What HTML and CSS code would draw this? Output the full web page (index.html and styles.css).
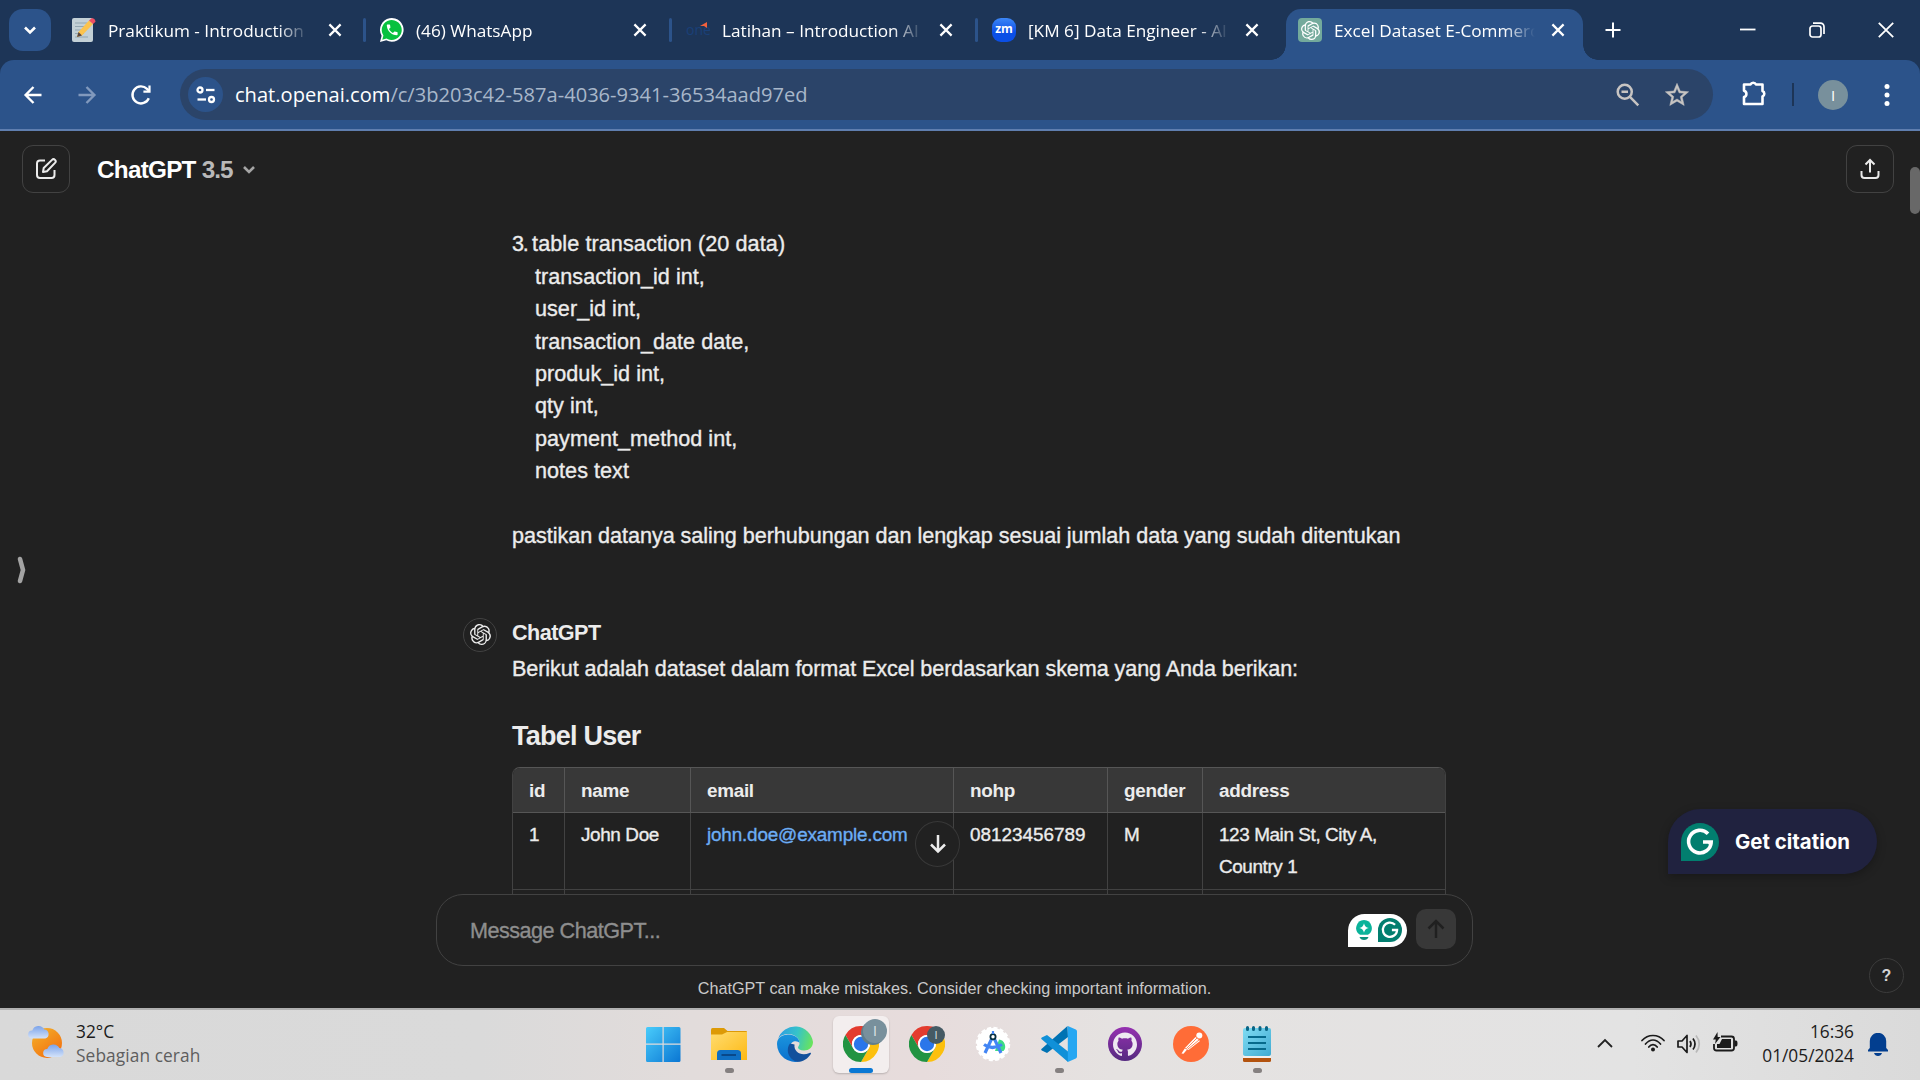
FILE: index.html
```html
<!DOCTYPE html>
<html lang="id">
<head>
<meta charset="utf-8">
<title>Excel Dataset E-Commerce</title>
<link rel="stylesheet" href="styles.css">
</head>
<body>
<svg class="defs" aria-hidden="true">
  <symbol id="openai" viewBox="0 0 24 24"><path d="M22.2819 9.8211a5.9847 5.9847 0 0 0-.5157-4.9108 6.0462 6.0462 0 0 0-6.5098-2.9A6.0651 6.0651 0 0 0 4.9807 4.1818a5.9847 5.9847 0 0 0-3.9977 2.9 6.0462 6.0462 0 0 0 .7427 7.0966 5.98 5.98 0 0 0 .511 4.9107 6.051 6.051 0 0 0 6.5146 2.9001A5.9847 5.9847 0 0 0 13.2599 24a6.0557 6.0557 0 0 0 5.7718-4.2058 5.9894 5.9894 0 0 0 3.9977-2.9001 6.0557 6.0557 0 0 0-.7475-7.0729zm-9.022 12.6081a4.4755 4.4755 0 0 1-2.8764-1.0408l.1419-.0804 4.7783-2.7582a.7948.7948 0 0 0 .3927-.6813v-6.7369l2.02 1.1686a.071.071 0 0 1 .038.052v5.5826a4.504 4.504 0 0 1-4.4945 4.4944zm-9.6607-4.1254a4.4708 4.4708 0 0 1-.5346-3.0137l.142.0852 4.783 2.7582a.7712.7712 0 0 0 .7806 0l5.8428-3.3685v2.3324a.0804.0804 0 0 1-.0332.0615L9.74 19.9502a4.4992 4.4992 0 0 1-6.1408-1.6464zM2.3408 7.8956a4.485 4.485 0 0 1 2.3655-1.9728V11.6a.7664.7664 0 0 0 .3879.6765l5.8144 3.3543-2.0201 1.1685a.0757.0757 0 0 1-.071 0l-4.8303-2.7865A4.504 4.504 0 0 1 2.3408 7.872zm16.5963 3.8558L13.1038 8.364 15.1192 7.2a.0757.0757 0 0 1 .071 0l4.8303 2.7913a4.4944 4.4944 0 0 1-.6765 8.1042v-5.6772a.79.79 0 0 0-.407-.667zm2.0107-3.0231l-.142-.0852-4.7735-2.7818a.7759.7759 0 0 0-.7854 0L9.409 9.2297V6.8974a.0662.0662 0 0 1 .0284-.0615l4.8303-2.7866a4.4992 4.4992 0 0 1 6.6802 4.66zM8.3065 12.863l-2.02-1.1638a.0804.0804 0 0 1-.038-.0567V6.0742a4.4992 4.4992 0 0 1 7.3757-3.4537l-.142.0805L8.704 5.459a.7948.7948 0 0 0-.3927.6813zm1.0976-2.3654l2.602-1.4998 2.6069 1.4998v2.9994l-2.5974 1.4997-2.6067-1.4997Z" fill="currentColor"/></symbol>
  <symbol id="close" viewBox="0 0 24 24"><path d="M6.4 6.4 17.6 17.6M17.6 6.4 6.4 17.6" stroke="currentColor" stroke-width="2.2" fill="none"/></symbol>
  <symbol id="grammarly" viewBox="0 0 38 38"><path d="M0 38V19a19 19 0 1 1 19 19z" fill="#027e6f"/><path d="M27 10.7A11.3 11.3 0 1 0 30.2 19H22M28.6 22l2-3" fill="none" stroke="#fff" stroke-width="3.6"/></symbol>
  <symbol id="chrome" viewBox="0 0 36 36">
    <path d="M2.41 9A18 18 0 0 1 33.59 9L18 9A9 9 0 0 0 10.2 22.5Z" fill="#e33b2e"/>
    <path d="M2.41 9A18 18 0 0 1 33.59 9L18 9A9 9 0 0 0 10.2 22.5Z" fill="#fcc00d" transform="rotate(120 18 18)"/>
    <path d="M2.41 9A18 18 0 0 1 33.59 9L18 9A9 9 0 0 0 10.2 22.5Z" fill="#229342" transform="rotate(240 18 18)"/>
    <circle cx="18" cy="18" r="9" fill="#fff"/><circle cx="18" cy="18" r="7.2" fill="#2a76ea"/>
  </symbol>
</svg>

<header class="tabstrip">
  <button class="tab-search"><svg width="24" height="24" viewBox="0 0 24 24"><path d="m7 9.500 5 5 5-5" fill="none" stroke="#fff" stroke-width="2.600"/></svg></button>
  <div class="tab first-tab">
    <svg class="favicon" viewBox="0 0 24 24"><rect x="0" y="0" width="21" height="24" rx="2" fill="#c3d0d6"/><path d="M3 5h12M3 8.500h12M3 12h9M3 15.500h9M3 19h13" stroke="#93a6b0" stroke-width="1"/><path d="m5 19 1.500-5L17 2.500l4 3.500L10 17.500z" fill="#fcc34c"/><path d="m5 19 1.500-5 3.500 3.500z" fill="#59453f"/><path d="M17 2.500 19.500.3q3.500-.3 4 3.400L21 6z" fill="#ef4f62"/></svg>
    <span class="tab-title">Praktikum - Introduction A</span>
    <svg class="tab-close"><use href="#close"/></svg>
  </div>
  <div class="tab">
    <svg class="favicon" viewBox="0 0 24 24"><path d="M0 24 1.600 17.800A11.800 11.800 0 1 1 6.300 22.300z" fill="#fff"/><path d="m2.300 21.700 1.100-4.200A10 10 0 1 1 6.500 20.500z" fill="#08c13f"/><path d="M6.620 10.790c1.440 2.830 3.760 5.140 6.590 6.590l2.200-2.200c.27-.27.67-.36 1.020-.24 1.120.37 2.330.57 3.570.57.550 0 1 .45 1 1V20c0 .55-.45 1-1 1-9.390 0-17-7.610-17-17 0-.55.45-1 1-1h3.500c.550 0 1 .45 1 1 0 1.250.2 2.450.57 3.570.110.350.030.740-.25 1.020z" transform="translate(5 4.600) scale(.6)" fill="#fff"/></svg>
    <span class="tab-title">(46) WhatsApp</span>
    <svg class="tab-close"><use href="#close"/></svg>
  </div>
  <div class="tab">
    <span class="favicon one">one<svg viewBox="0 0 8 8"><path d="M0 4 7 0v6L4 4z" fill="#f2603c"/></svg></span>
    <span class="tab-title">Latihan – Introduction AI</span>
    <svg class="tab-close"><use href="#close"/></svg>
  </div>
  <div class="tab">
    <span class="favicon zm">zm</span>
    <span class="tab-title">[KM 6] Data Engineer - AI</span>
    <svg class="tab-close"><use href="#close"/></svg>
  </div>
  <div class="tab active">
    <span class="favicon gpt"><svg viewBox="0 0 24 24"><use href="#openai"/></svg></span>
    <span class="tab-title">Excel Dataset E-Commerc</span>
    <svg class="tab-close"><use href="#close"/></svg>
  </div>
  <svg class="new-tab" viewBox="0 0 24 24"><path d="M12 3v18M3 12h18" stroke="#fff" stroke-width="2.400"/></svg>
  <div class="window-controls">
    <svg viewBox="0 0 16 16"><path d="M0 7.500h15.500" stroke="#fff" stroke-width="1.800"/></svg>
    <svg viewBox="0 0 16 16"><rect x="1" y="4" width="11" height="11" rx="2.500" fill="none" stroke="#fff" stroke-width="1.700"/><path d="M4 1.200h7.500a3.500 3.500 0 0 1 3.500 3.500V12" fill="none" stroke="#fff" stroke-width="1.700"/></svg>
    <svg viewBox="0 0 16 16"><path d="m.8.800 14.400 14.400M15.200.8.800 15.200" stroke="#fff" stroke-width="1.800"/></svg>
  </div>
</header>

<nav class="toolbar-wrap"><div class="toolbar">
  <svg class="nav-icon" viewBox="0 0 24 24"><path d="M20.500 12H5M12.500 4 4.600 12l7.900 8" fill="none" stroke="#fff" stroke-width="2.400"/></svg>
  <svg class="nav-icon" viewBox="0 0 24 24"><path d="M3.500 12H19M11.500 4l7.900 8-7.900 8" fill="none" stroke="#8199bd" stroke-width="2.400"/></svg>
  <svg class="nav-icon" viewBox="0 0 24 24"><path d="M19.800 15.200A8.500 8.500 0 1 1 18 5.900L20.300 8.200" fill="none" stroke="#fff" stroke-width="2.400"/><path d="M21.600 2.500v7.200h-7.200V7.500h5v-5z" fill="#fff"/></svg>
  <div class="omnibox">
    <span class="site-info"><svg width="20" height="18" viewBox="0 0 20 18"><g fill="none" stroke="#fff" stroke-width="2.300"><circle cx="4" cy="4" r="2.500"/><path d="M10 4h8.500"/><circle cx="15.500" cy="13.500" r="2.500"/><path d="M1.500 13.500H10"/></g></svg></span>
    <span class="url">chat.openai.com<i>/c/3b203c42-587a-4036-9341-36534aad97ed</i></span>
    <svg class="zoom-out" width="26" height="26" viewBox="0 0 24 24"><g fill="none" stroke="#c7c4c2" stroke-width="2.300"><circle cx="9" cy="9" r="6.500"/><path d="m13.800 13.800 7.700 7.700M6 9h6"/></g></svg>
    <svg width="28" height="28" viewBox="0 0 24 24"><path fill="#c7c4c2" stroke="#c7c4c2" stroke-width=".4" d="m22 9.240-7.190-.62L12 2 9.190 8.630 2 9.240l5.460 4.730L5.820 21 12 17.270 18.180 21l-1.630-7.030zM12 15.400l-3.760 2.270 1-4.280-3.320-2.880 4.380-.38L12 6.100l1.710 4.040 4.380.38-3.320 2.880 1 4.280z"/></svg>
  </div>
  <svg class="extension" width="26" height="26" viewBox="0 0 26 26"><path d="M3 4.500h6.500a3 3 0 0 1 5.500 0h6.500V11a3 3 0 0 1 0 5.500V24H3v-7a3.200 3.200 0 0 0 0-6.200z" fill="none" stroke="#fff" stroke-width="2.600" stroke-linejoin="round"/></svg>
  <span class="divider"></span>
  <span class="profile">I</span>
  <svg class="more" width="6" height="24" viewBox="0 0 6 24"><g fill="#fff"><circle cx="3" cy="3.500" r="2.500"/><circle cx="3" cy="12" r="2.500"/><circle cx="3" cy="20.500" r="2.500"/></g></svg>
</div></nav>

<main class="page">
  <section class="chat">
    <div class="chat-header">
      <button class="square"><svg width="22" height="22" viewBox="0 0 22 22"><path d="M10 2.500H5A3 3 0 0 0 2 5.500V17a3 3 0 0 0 3 3h11.500a3 3 0 0 0 3-3v-5M8 14l.7-4L17 1.900a2 2 0 0 1 3 3L12 13.200z" fill="none" stroke="#ececec" stroke-width="2" stroke-linejoin="round"/></svg></button>
      <div class="model"><b>ChatGPT</b> <span>3.5</span><svg width="14" height="10" viewBox="0 0 14 10"><path d="m2 2 5 5 5-5" fill="none" stroke="#a5a5a5" stroke-width="2.600"/></svg></div>
      <button class="square share"><svg width="22" height="22" viewBox="0 0 22 22"><path d="M2.500 13v4a3 3 0 0 0 3 3h11a3 3 0 0 0 3-3v-4M11 14.500V2.500M6.500 6.500 11 2l4.500 4.500" fill="none" stroke="#ececec" stroke-width="2"/></svg></button>
    </div>
    <div class="thread">
      <div class="user-message">
        <p class="first"><span>3. </span>table transaction (20 data)</p>
        <div class="fields">
          <p>transaction_id int,</p><p>user_id int,</p><p>transaction_date date,</p><p>produk_id int,</p><p>qty int,</p><p>payment_method int,</p><p>notes text</p>
        </div>
        <p class="closing">pastikan datanya saling berhubungan dan lengkap sesuai jumlah data yang sudah ditentukan</p>
      </div>
      <div class="reply">
        <span class="avatar"><svg width="21" height="21"><use href="#openai"/></svg></span>
        <div class="reply-body">
          <p class="author">ChatGPT</p>
          <p class="intro">Berikut adalah dataset dalam format Excel berdasarkan skema yang Anda berikan:</p>
          <h3>Tabel User</h3>
          <div class="table">
            <div class="row head"><span>id</span><span>name</span><span>email</span><span>nohp</span><span>gender</span><span>address</span></div>
            <div class="row"><span>1</span><span class="name">John Doe</span><span><a>john.doe@example.com</a></span><span>08123456789</span><span>M</span><span class="street">123 Main St, City A,<br>Country 1</span></div>
            <div class="row"><span></span><span></span><span></span><span></span><span></span><span></span></div>
          </div>
        </div>
      </div>
    </div>
  </section>
  <section class="composer-area">
    <div class="composer">
      <span class="placeholder">Message ChatGPT...</span>
      <span class="assist">
        <svg width="16" height="20" viewBox="0 0 16 20"><path d="M8 0a8 8 0 0 1 4 14.800H4A8 8 0 0 1 8 0z" fill="#0ab39a"/><path d="M8 3.200q.7 4.100 4.800 4.800-4.100.7-4.800 4.800Q7.300 8.700 3.200 8 7.300 7.300 8 3.200z" fill="#fff"/><path d="M3.500 17h9q-1 3-4.500 3t-4.500-3z" fill="#0b8f7c"/></svg>
        <svg width="24" height="24"><use href="#grammarly"/></svg>
      </span>
      <button class="send"><svg width="18" height="20" viewBox="0 0 18 20"><path d="M9 19V2.500M1.500 9.500 9 2l7.500 7.500" fill="none" stroke="#202020" stroke-width="2.500"/></svg></button>
    </div>
    <p class="disclaimer">ChatGPT can make mistakes. Consider checking important information.</p>
  </section>
  <svg class="handle" width="12" height="30" viewBox="0 0 12 30"><path d="M4 4 7 15 4 26" fill="none" stroke="#a3a3a3" stroke-width="4.600" stroke-linecap="round" stroke-linejoin="round"/></svg>
  <button class="to-bottom"><svg width="18" height="20" viewBox="0 0 18 20"><path d="M9 1v16.500M2 10.500l7 7 7-7" fill="none" stroke="#ececec" stroke-width="2.500"/></svg></button>
  <div class="citation"><svg width="38" height="38"><use href="#grammarly"/></svg><span>Get citation</span></div>
  <button class="help">?</button>
  <span class="scroll-thumb"></span>
</main>

<footer class="taskbar">
  <div class="weather">
    <svg width="38" height="36" viewBox="0 0 38 36"><defs><linearGradient id="sun" x1="0" y1="0" x2=".7" y2="1"><stop offset="0" stop-color="#f4b52c"/><stop offset="1" stop-color="#f2700f"/></linearGradient><linearGradient id="cloud" x1="0" y1="0" x2="0" y2="1"><stop offset="0" stop-color="#7ba3ea"/><stop offset="1" stop-color="#d3e2f9"/></linearGradient></defs><circle cx="19" cy="19" r="15" fill="url(#sun)"/><path d="M4 14.500a4 4 0 0 1 .3-8 6.500 6.500 0 0 1 12-1 4.600 4.600 0 0 1 1 9z" fill="url(#cloud)"/><path d="M4 14.500a4 4 0 0 1 .3-8 6.500 6.500 0 0 1 12-1 4.600 4.600 0 0 1 1 9z" fill="url(#cloud)" transform="translate(15 18.500)"/></svg>
    <div><p>32°C</p><p class="muted">Sebagian cerah</p></div>
  </div>
  <div class="apps">
    <span class="app"><svg viewBox="0 0 36 36"><defs><linearGradient id="win" x1="0" y1="0" x2="1" y2="1"><stop offset="0" stop-color="#49ccfb"/><stop offset="1" stop-color="#0a76d3"/></linearGradient></defs><path d="M2.500 1H17.500V17.500H1V2.500Q1 1 2.500 1zM18.700 1H34q1.500 0 1.500 1.500V17.500H18.700zM1 18.700H17.500V36H2.500Q1 36 1 34.500zM18.700 18.700H35.500V34.500Q35.500 36 34 36H18.700z" fill="url(#win)"/></svg></span>
    <span class="app open"><svg viewBox="0 0 36 36"><defs><linearGradient id="fold" x1="0" y1="0" x2="1" y2="1"><stop offset="0" stop-color="#ffdc70"/><stop offset="1" stop-color="#fdb913"/></linearGradient></defs><path d="M0 4q0-2 1.500-2H13l3.500 3H35q1 0 1 1v5H0z" fill="#dd9a06"/><path d="M0 8.500h11L16 6h20v28H0z" fill="url(#fold)"/><path d="M6 34v-6.500q0-3.500 3.500-3.500h17q3.500 0 3.500 3.500V34z" fill="#0f6fc3"/><path d="M10.500 29h14.500" stroke="#0a4483" stroke-width="1.800"/></svg></span>
    <span class="app"><svg viewBox="0 0 36 36"><defs><linearGradient id="e1" x1="0" y1=".4" x2="1" y2=".6"><stop offset="0" stop-color="#2f9fe2"/><stop offset=".5" stop-color="#36c3c9"/><stop offset="1" stop-color="#6ae45b"/></linearGradient><linearGradient id="e2" x1="0" y1="0" x2="0" y2="1"><stop offset="0" stop-color="#1b95dd"/><stop offset="1" stop-color="#0a6fcd"/></linearGradient></defs><path d="M1 13A18 18 0 0 1 36 16c0 5-4 8.500-9 8.500-4 0-6-1.500-6-3 0-1.200 1.500-1.800 1.500-4.500C22.500 11 16 8 11 8 6 8 2.500 10.500 1 13z" fill="url(#e1)"/><path d="M0 18C0 12 5 8.500 11 8.500c7 0 11.500 4 11.500 8.500-2-3-9-3-10 5-.8 6 3.500 13 10.500 13.200A18 18 0 0 1 0 18z" fill="url(#e2)"/><path d="M13 17.500c-4 5-3 15.500 7.500 18.300C26 36 31 32.500 33.800 28c.6-1-.4-1.600-1.300-1.100-8 3.700-16-.9-15-8.400z" fill="#12509c"/></svg></span>
    <span class="app current"><svg viewBox="0 0 36 36"><use href="#chrome"/></svg><i class="badge big">I</i></span>
    <span class="app"><svg viewBox="0 0 36 36"><use href="#chrome"/></svg><i class="badge">I</i></span>
    <span class="app"><svg viewBox="0 0 36 36"><circle cx="18" cy="18" r="16" fill="#fff" stroke="#fff" stroke-width="2.500" stroke-dasharray="4 2.280"/><path d="M24 13.500a7 7 0 0 1 4.500 11.500H20z" fill="#3ddc84"/><path d="m10 27 7-15h2l7 15M9 18.500q8 6 18 0" fill="none" stroke="#4285f4" stroke-width="3.200"/><circle cx="18" cy="10.800" r="2.600" fill="#fff" stroke="#073042" stroke-width="1.800"/><path d="M18 5v3" stroke="#4285f4" stroke-width="2.200"/></svg></span>
    <span class="app open"><svg viewBox="0 0 36 36"><path d="M1 22.500 26.500 0 27 11 6 27 .8 24.500q-1.300-1 .2-2z" fill="#0072b3"/><path d="M1 13.500 27 36V25.500L6 9 .8 11.500q-1.300 1 .2 2z" fill="#1090d8"/><path d="m26.800 0 8 3.500q1.200.5 1.200 2v25q0 1.500-1.200 2l-8 3.500z" fill="#26a7f2"/></svg></span>
    <span class="app"><svg viewBox="0 0 36 36"><defs><linearGradient id="gh" x1="0" y1="0" x2="0" y2="1"><stop offset="0" stop-color="#9530b0"/><stop offset="1" stop-color="#552a80"/></linearGradient></defs><circle cx="18" cy="18" r="17" fill="url(#gh)"/><path transform="translate(6 6.200)" fill="#eee9f1" d="M12 .297c-6.630 0-12 5.373-12 12 0 5.303 3.438 9.800 8.205 11.385.6.113.82-.258.82-.577 0-.285-.010-1.040-.015-2.040-3.338.724-4.042-1.610-4.042-1.610C4.422 18.070 3.633 17.700 3.633 17.700c-1.087-.744.084-.729.084-.729 1.205.084 1.838 1.236 1.838 1.236 1.070 1.835 2.809 1.305 3.495.998.108-.776.417-1.305.76-1.605-2.665-.3-5.466-1.332-5.466-5.930 0-1.310.465-2.380 1.235-3.220-.135-.303-.54-1.523.105-3.176 0 0 1.005-.322 3.300 1.230.96-.267 1.980-.399 3-.405 1.020.006 2.040.138 3 .405 2.280-1.552 3.285-1.230 3.285-1.230.645 1.653.24 2.873.12 3.176.765.84 1.230 1.910 1.230 3.220 0 4.610-2.805 5.625-5.475 5.920.42.360.81 1.096.81 2.220 0 1.606-.015 2.896-.015 3.286 0 .315.21.69.825.57C20.565 22.092 24 17.592 24 12.297c0-6.627-5.373-12-12-12"/></svg></span>
    <span class="app"><svg viewBox="0 0 36 36"><circle cx="18" cy="18" r="18" fill="#ff6c37"/><circle cx="26.300" cy="9.600" r="3" fill="#fff"/><path d="M22.500 11 27 15 15.500 24l-4-1.500zM12 22 8.500 27.500l2 .3 4-4.800z" fill="#fff"/><path d="m24.500 11.500-11 11M26 14 15 23" stroke="#ff6c37" stroke-width=".8"/></svg></span>
    <span class="app open"><svg viewBox="0 0 36 36"><defs><linearGradient id="np" x1="0" y1="0" x2="1" y2="1"><stop offset="0" stop-color="#7fdcf3"/><stop offset="1" stop-color="#41abd2"/></linearGradient></defs><path d="M4 32h28v2.500q0 1.500-1.500 1.500h-25Q4 36 4 34.500z" fill="#b3530f"/><path d="M4 29h28v3H4z" fill="#f4efec"/><path d="M4 4q0-2 2-2h24q2 0 2 2v24q0 2-2 2H6q-2 0-2-2z" fill="url(#np)"/><path d="M9 11h18M9 17h18M9 23h18" stroke="#066a8c" stroke-width="1.800"/><path d="M8.500 1.500v2M14.500 1.500v2M21 1.500v2M27.500 1.500v2" stroke="#0a6484" stroke-width="3" stroke-linecap="round"/></svg></span>
  </div>
  <div class="tray">
    <svg class="chev" width="16" height="10" viewBox="0 0 16 10"><path d="m1 9 7-7 7 7" fill="none" stroke="#222" stroke-width="1.800"/></svg>
    <svg class="wifi" width="24" height="19" viewBox="0 0 24 19"><g fill="none" stroke="#1b1b1b" stroke-width="1.700" stroke-linecap="round"><path d="M1 6.500Q5.500 1.500 12 1.500t11 5M4.500 10Q8 6 12 6t7.500 4M7.800 13Q9.500 10.600 12 10.600t4.200 2.400"/></g><circle cx="12" cy="15.500" r="2" fill="#1b1b1b"/></svg>
    <svg class="vol" width="24" height="20" viewBox="0 0 24 20"><g fill="none" stroke="#1b1b1b" stroke-width="1.700" stroke-linejoin="round"><path d="M1 7h4l5-5.500v17L5 13H1zM13 7q2 3 0 6M16 4.500q4 5.500 0 11"/><path d="M19 1.500q6.500 8.500 0 17" stroke="#b9b9b9"/></g></svg>
    <svg class="bat" width="25" height="20" viewBox="0 0 25 20"><path d="M8 4.500h10.500q2.500 0 2.500 2.500v9q0 2.500-2.500 2.500h-15Q1 18.500 1 16v-4" fill="none" stroke="#1b1b1b" stroke-width="1.800"/><path d="M9 7h9v9H4v-4h2.500zM21.500 8.500h1.500q1.500 0 1.500 3t-1.500 3h-1.500zM4.500 0 0 7.500h2.800L2 12l5.500-7H4.700z" fill="#1b1b1b"/></svg>
    <div class="clock"><p>16:36</p><p>01/05/2024</p></div>
    <svg class="bell" width="20" height="23" viewBox="0 0 20 23"><path d="M0 18.500V17l1.800-2V8a8.200 8.200 0 0 1 16.400 0v7l1.800 2v1.500zM6 20h8q-1 3-4 3t-4-3z" fill="#023e8f"/></svg>
  </div>
</footer>
</body>
</html>
```
FILE: styles.css
```css
* { box-sizing: border-box; }
body { margin: 0; width: 1920px; height: 1080px; overflow: hidden; display: flex; flex-direction: column; background: #212121; color: #ececec; font-family: "Liberation Sans", Arial, sans-serif; }
p, h3 { margin: 0; }
button { padding: 0; font: inherit; color: inherit; background: none; border: 0; display: grid; place-items: center; }
svg { display: block; flex: none; }
i { font-style: normal; }
.defs { position: absolute; width: 0; height: 0; }

/* Browser tabs */
.tabstrip { height: 60px; flex: none; display: flex; align-items: flex-start; padding: 9px 0 0 9px; background: #1d3557; color: #fff; font: 17.2px "Open Sans", "Noto Sans", sans-serif; }
.tab-search { width: 42px; height: 42px; border-radius: 14px; background: #2c538a; margin-right: 9px; }
.tab { width: 306px; height: 51px; flex: none; display: flex; align-items: center; padding: 0 0 9px 14px; position: relative; }
.first-tab { padding-left: 12px; }
.tab:not(.active):not(:nth-child(5))::after { content: ""; width: 3px; height: 24px; border-radius: 2px; background: #2c538a; margin-left: auto; }
.tab.active { width: 297px; margin-left: 2px; padding-left: 12px; background: #2c538a; border-radius: 15px 15px 0 0; }
.tab.active::before, .tab.active::after { content: ""; position: absolute; bottom: 0; width: 15px; height: 15px; }
.tab.active::before { left: -15px; background: radial-gradient(circle at 0 0, transparent 14.500px, #2c538a 15px); }
.tab.active::after { right: -15px; background: radial-gradient(circle at 100% 0, transparent 14.500px, #2c538a 15px); }
.favicon { width: 24px; height: 24px; flex: none; }
.tab-title { width: 201px; margin: 2px 11px 0 12px; overflow: hidden; white-space: nowrap; line-height: 24px; -webkit-mask-image: linear-gradient(90deg, #000 170px, transparent 201px); mask-image: linear-gradient(90deg, #000 170px, transparent 201px); }
.first-tab .tab-title { width: 204px; }
.tab-close { width: 24px; height: 24px; }
.one { position: relative; font: 14px/24px "Open Sans", sans-serif; color: #1a4078; }
.one svg { position: absolute; right: 2px; top: 4px; width: 8px; height: 8px; }
.zm { border-radius: 9px; background: linear-gradient(#3c87f7, #0b4fe6 60%); font: bold 12px/22px "Open Sans", sans-serif; text-align: center; }
.gpt { border-radius: 4px; background: #74aa9c; display: grid; place-items: center; color: #fff; }
.gpt svg { width: 19px; height: 19px; }
.new-tab { width: 20px; height: 20px; margin: 11px 0 0 20px; }
.window-controls { display: flex; gap: 53px; margin: 13px 26px 0 auto; }
.window-controls svg { width: 16px; height: 16px; }

/* Address bar */
.toolbar-wrap { height: 71px; flex: none; background: #1d3557; }
.toolbar { height: 71px; display: flex; align-items: center; padding: 0 30px 0 21px; background: #2c538a; border-radius: 14px 14px 0 0; border-bottom: 2px solid #5f7eaf; }
.nav-icon { width: 24px; height: 24px; margin-right: 30px; }
.nav-icon:nth-child(3) { margin-right: 27px; }
.omnibox { width: 1533px; height: 51px; border-radius: 26px; background: #2b4469; display: flex; align-items: center; padding: 0 22px 0 8px; color: #fff; font: 20.1px "Open Sans", "Noto Sans", sans-serif; }
.site-info { width: 35px; height: 35px; border-radius: 50%; background: #2c538a; display: grid; place-items: center; margin-right: 12px; }
.url i { color: #a8b7ca; }
.zoom-out { margin: 0 22px 0 auto; }
.extension { margin: -3px 25px 0 28px; }
.divider { width: 2px; height: 23px; background: #1d3557; }
.profile { width: 30px; height: 30px; margin: 0 36px 0 auto; border-radius: 50%; background: #78909c; color: #fff; font: 15px/30px "Open Sans", sans-serif; text-align: center; }

/* Conversation */
.page { height: 877px; flex: none; position: relative; padding-right: 11px; }
.chat { height: 763px; overflow: hidden; }
.chat-header { height: 97.400px; padding: 14px 15px 0 22px; display: flex; align-items: flex-start; }
.square { width: 48px; height: 48px; border: 1px solid #424242; border-radius: 11px; }
.share { margin-left: auto; }
.model { height: 48px; padding-top: 1px; margin-left: 27px; display: flex; align-items: center; gap: 6px; font-size: 24.3px; letter-spacing: -.75px; color: #fff; }
.model span { color: #b9b9b9; font-weight: bold; letter-spacing: -1px; }
.model svg { margin-left: 4px; }
.thread { width: 983px; margin: 0 auto; font-size: 21.6px; line-height: 32.400px; -webkit-text-stroke: .35px; white-space: nowrap; }
.user-message { padding-left: 49px; }
.first span { letter-spacing: -1.300px; }
.first { letter-spacing: .08px; }
.fields { padding-left: 23px; letter-spacing: .03px; }
.closing { margin-top: 32.400px; letter-spacing: -.04px; }
.reply { display: flex; gap: 15px; margin-top: 64.400px; }
.avatar { width: 34px; height: 34px; flex: none; margin-top: 1px; border: 1px solid #424242; border-radius: 50%; display: grid; place-items: center; -webkit-text-stroke: 0; }
.author { font-weight: bold; letter-spacing: -.55px; -webkit-text-stroke: 0; }
.intro { margin-top: 3.600px; letter-spacing: -.08px; }
h3 { margin: 32.600px 0 13.200px; font-size: 27px; line-height: 36px; letter-spacing: -.75px; -webkit-text-stroke: 0; }
.table { width: 934px; border: 1px solid #424242; border-color: #565656 #424242 #424242; border-radius: 8px 8px 0 0; overflow: hidden; font-size: 18.9px; }
.row { display: grid; grid-template-columns: 51px 126px 263px 154px 95px 1fr; border-bottom: 1px solid #424242; min-height: 40px; }
.row span { padding: 6px 0 4.800px 16px; border-left: 1px solid #424242; }
.row span:first-child { border-left: 0; }
.head { background: #383838; font-weight: bold; border-color: #565656; letter-spacing: -.3px; -webkit-text-stroke: 0; }
.row.head span { padding-top: 7.200px; padding-bottom: 4.400px; border-color: #565656; }
.table a { color: #6cadf4; letter-spacing: -.17px; }
.name { letter-spacing: -.37px; }
.street { letter-spacing: -.4px; }

/* Composer */
.composer-area { display: flex; flex-direction: column; align-items: center; }
.composer { width: 1037px; height: 72px; border: 1px solid #424242; border-radius: 27px; display: flex; align-items: center; padding: 0 16px 0 33px; background: #212121; }
.placeholder { padding-top: 1px; font-size: 21.6px; letter-spacing: -.5px; color: #8e8e8e; -webkit-text-stroke: .35px; }
.assist { width: 59px; height: 33px; margin: 0 9px 0 auto; display: flex; align-items: center; justify-content: space-between; padding: 0 5px 0 8px; background: #fff; border-radius: 17px 17px 17px 0; }
.send { width: 40px; height: 40px; margin-top: -2px; border-radius: 10px; background: #383838; }
.disclaimer { margin-top: 12px; font-size: 16.2px; line-height: 20px; color: #c9c9c9; }

/* Floating widgets */
.handle { position: absolute; left: 16px; top: 424px; }
.to-bottom { position: absolute; left: 915px; top: 690px; width: 45px; height: 46px; border: 1px solid #383838; border-radius: 50%; background: #212121; }
.citation { position: absolute; left: 1668px; top: 678px; width: 209px; height: 65px; display: flex; align-items: center; gap: 16px; padding-left: 13px; background: #20223f; border-radius: 33px 33px 33px 0; box-shadow: 0 3px 10px #0004; color: #fff; font: bold 20.4px Inter, sans-serif; }
.help { position: absolute; left: 1869px; top: 827px; width: 35px; height: 35px; border: 1px solid #3c3c3c; border-radius: 50%; font-size: 16px; font-weight: bold; color: #d5d5d5; }
.scroll-thumb { position: absolute; right: 0; top: 36px; width: 10px; height: 47px; border-radius: 5px; background: #686868; }

/* Taskbar */
.taskbar { height: 72px; flex: none; display: grid; grid-template-columns: 630px 660px 1fr; border-top: 2px solid #b1b1b1; background: linear-gradient(90deg, #d9d9d9 0, #dadada 25%, #e2dcdb 36%, #e7dcdc 48%, #e5e2e1 58%, #e3e3e3 85%, #dadada 100%); color: #1b1b1b; font: 17.3px/24px "Open Sans", "Noto Sans", sans-serif; }
.weather { display: flex; padding: 10px 0 0 28px; gap: 10px; }
.weather svg { margin-top: 4px; }
.weather .muted { color: #5e5e5e; letter-spacing: .1px; }
.apps { display: flex; }
.app { position: relative; width: 56px; height: 57px; margin: 6px 5px 0; padding-bottom: 1px; border-radius: 6px; display: grid; place-items: center; }
.app svg { width: 36px; height: 36px; }
.current { background: #f3eeee; box-shadow: 0 1px 2px #0003; }
.open::after, .current::after { content: ""; position: absolute; bottom: 0; left: 24px; width: 9px; height: 5px; border-radius: 3px; background: #858080; }
.current::after { left: 16px; width: 24px; background: #0a78d4; }
.badge { position: absolute; left: 28px; top: 10px; width: 18px; height: 18px; border-radius: 50%; background: #455a64; color: #dfe5e8; font: 11px/18px "Open Sans", sans-serif; text-align: center; }
.badge.big { left: 30px; top: 3px; width: 24px; height: 24px; background: #78909c; font-size: 14px; line-height: 24px; box-shadow: -2px 2px 0 #607d8b; }
.tray { display: flex; align-items: flex-start; }
.chev { margin: 28px 0 0 307px; }
.wifi { margin: 24px 0 0 28px; }
.vol { margin: 24px 0 0 12px; }
.bat { margin: 22px 0 0 12px; }
.clock { width: 116px; padding-top: 10px; text-align: right; }
.bell { margin: 23px 0 0 14px; }
```
